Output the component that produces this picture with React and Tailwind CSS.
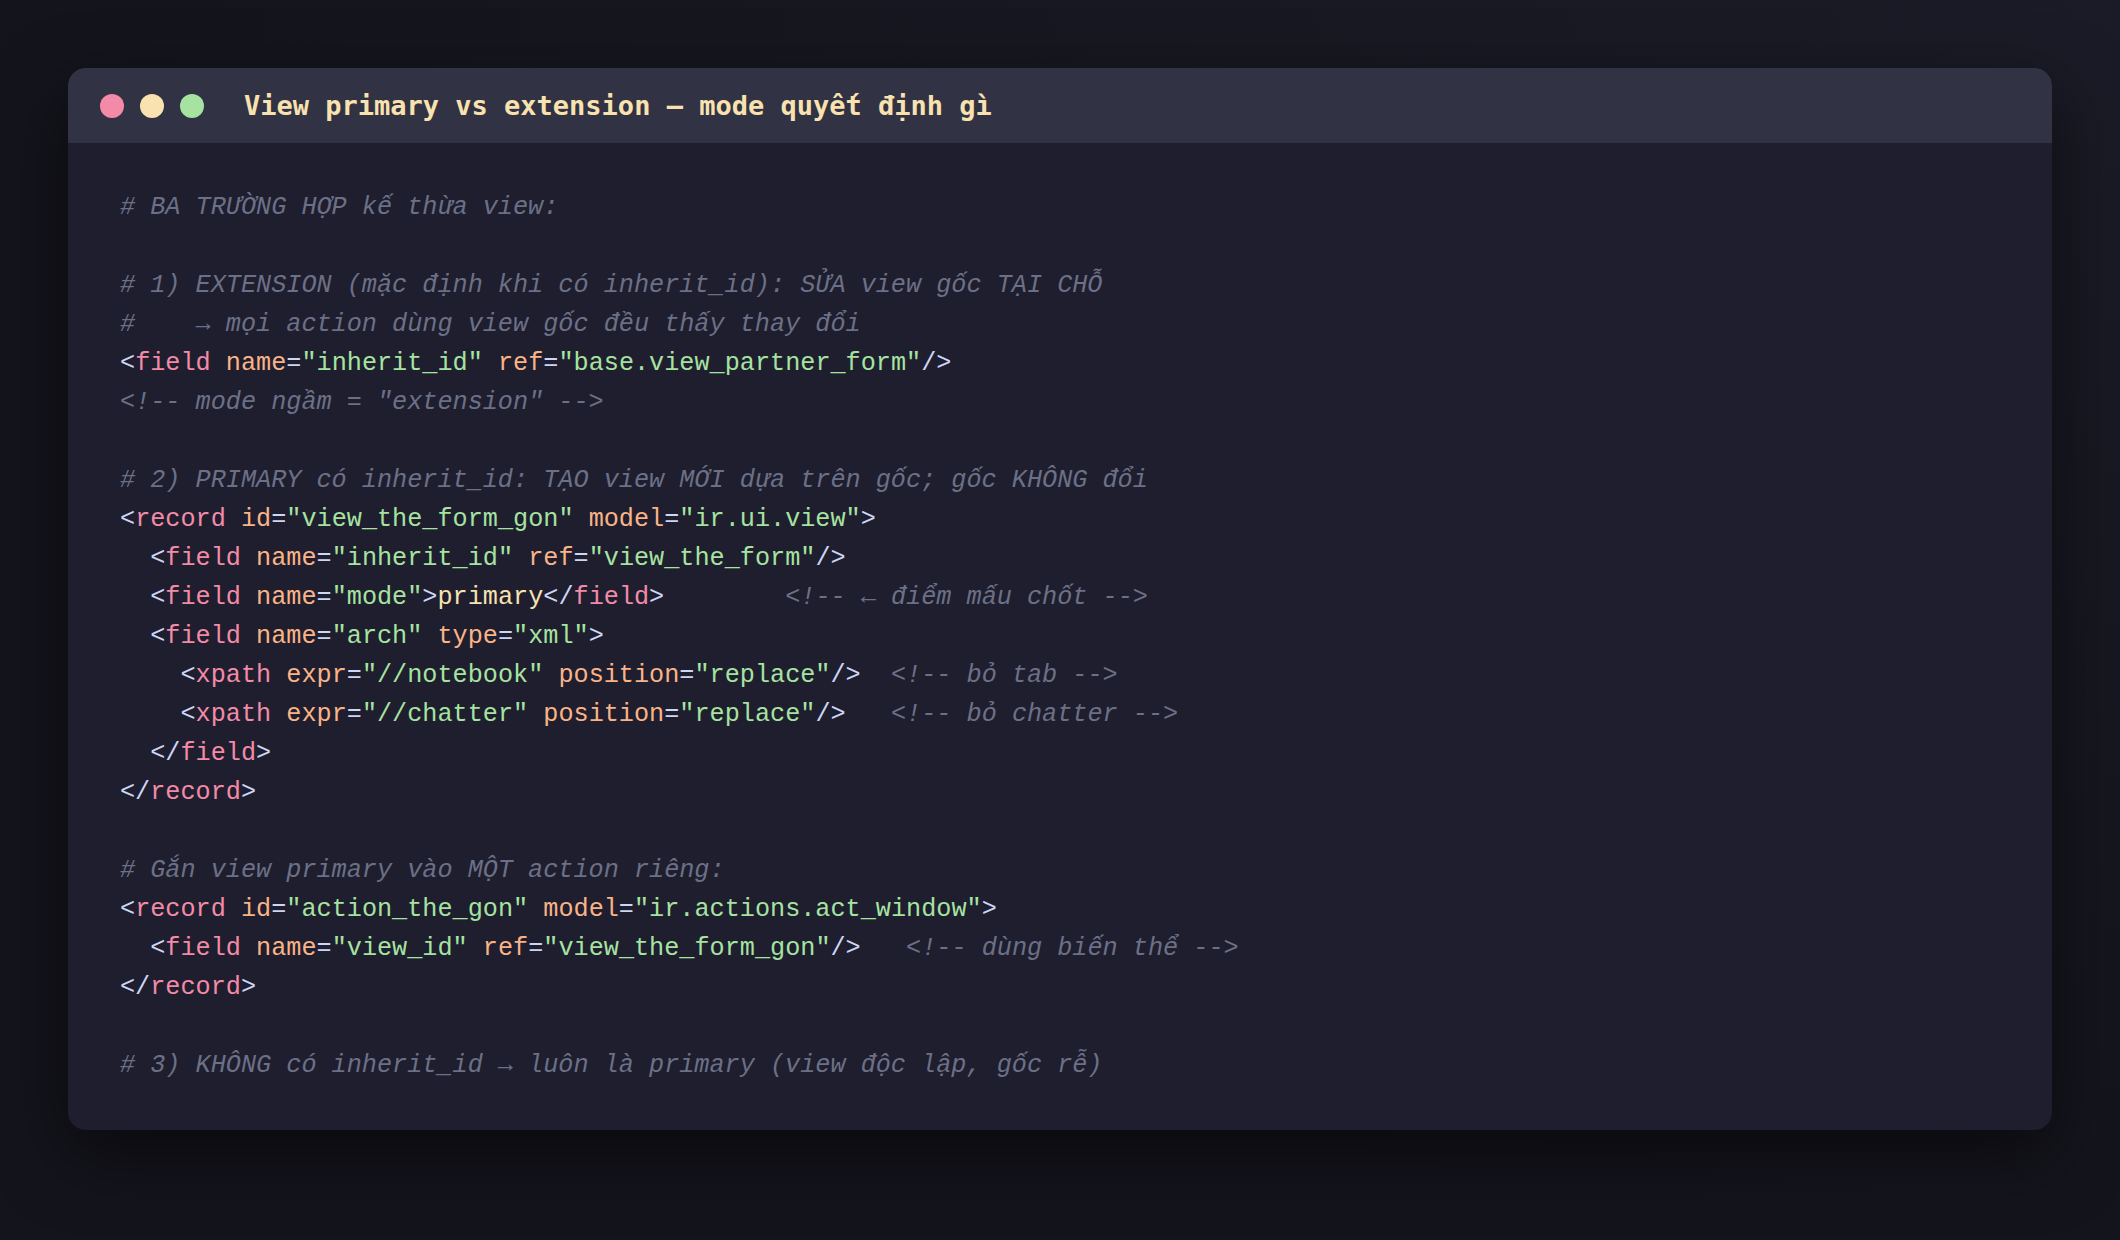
const lines = [
  "# BA TRƯỜNG HỢP kế thừa view:",
  "",
  "# 1) EXTENSION (mặc định khi có inherit_id): SỬA view gốc TẠI CHỖ",
  "#    → mọi action dùng view gốc đều thấy thay đổi",
  '<field name="inherit_id" ref="base.view_partner_form"/>',
  '<!-- mode ngầm = "extension" -->',
  "",
  "# 2) PRIMARY có inherit_id: TẠO view MỚI dựa trên gốc; gốc KHÔNG đổi",
  '<record id="view_the_form_gon" model="ir.ui.view">',
  '  <field name="inherit_id" ref="view_the_form"/>',
  '  <field name="mode">primary</field>        <!-- ← điểm mấu chốt -->',
  '  <field name="arch" type="xml">',
  '    <xpath expr="//notebook" position="replace"/>  <!-- bỏ tab -->',
  '    <xpath expr="//chatter" position="replace"/>   <!-- bỏ chatter -->',
  "  </field>",
  "</record>",
  "",
  "# Gắn view primary vào MỘT action riêng:",
  '<record id="action_the_gon" model="ir.actions.act_window">',
  '  <field name="view_id" ref="view_the_form_gon"/>   <!-- dùng biến thể -->',
  "</record>",
  "",
  "# 3) KHÔNG có inherit_id → luôn là primary (view độc lập, gốc rễ)",
];

const colors = {
  p: "text-[#cdd6f4]",
  t: "text-[#f38ba8]",
  a: "text-[#fab387]",
  s: "text-[#a6e3a1]",
  x: "text-[#f9e2af]",
  c: "text-[#6c7086] italic",
  w: "",
};

// rough xml highlighter, good enough for this snippet
function tokenize(line) {
  if (line.trim().startsWith("#")) return [["c", line]];
  const out = [];
  const re = /(<!--.*?-->)|(<\/?)([\w.]+)|([\w-]+)(=)|("[^"]*")|(\/?>)|(\s+)|([^<\s"]+)/g;
  let m;
  while ((m = re.exec(line))) {
    if (m[1]) out.push(["c", m[1]]);
    else if (m[2]) {
      out.push(["p", m[2]]);
      out.push(["t", m[3]]);
    } else if (m[4]) {
      out.push(["a", m[4]]);
      out.push(["p", m[5]]);
    } else if (m[6]) out.push(["s", m[6]]);
    else if (m[7]) out.push(["p", m[7]]);
    else if (m[8]) out.push(["w", m[8]]);
    else if (m[9]) out.push(["x", m[9]]);
  }
  return out;
}

export default function App() {
  return (
    <div className="min-h-screen bg-[#17171f] bg-[radial-gradient(ellipse_at_top_right,#1b1b27,#14141c_70%)] p-[68px]">
      <div className="w-full rounded-[18px] overflow-hidden bg-[#1e1e2e] shadow-[0_24px_70px_rgba(0,0,0,0.55)]">
        {/* title bar */}
        <div className="h-[75px] bg-[#313244] flex items-center pl-8">
          <div className="flex items-center gap-4">
            <span className="w-6 h-6 rounded-full bg-[#f38ba8]" />
            <span className="w-6 h-6 rounded-full bg-[#f9e2af]" />
            <span className="w-6 h-6 rounded-full bg-[#a6e3a1]" />
          </div>
          <h1 className="ml-[40px] font-['DejaVu_Sans_Mono',monospace] font-bold text-[27px] text-[#f9e2af] leading-none">
            View primary vs extension — mode quyết định gì
          </h1>
        </div>

        {/* code */}
        <pre className="px-[52px] pt-[45px] pb-[45px] font-['Liberation_Mono',monospace] text-[25.2px] leading-[39px] text-[#cdd6f4]">
          {lines.map((line, i) => (
            <div key={i} className="h-[39px] whitespace-pre">
              {tokenize(line).map(([k, v], j) => (
                <span key={j} className={colors[k]}>
                  {v}
                </span>
              ))}
            </div>
          ))}
        </pre>
      </div>
    </div>
  );
}
